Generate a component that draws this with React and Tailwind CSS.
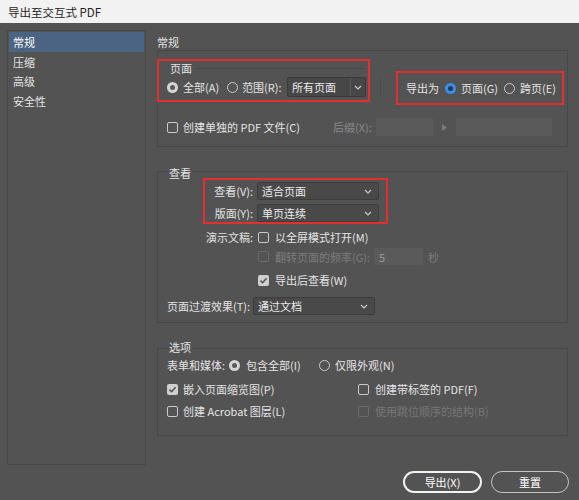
import React from "react";

function Radio({ checked, blue, className = "" }) {
  if (blue) {
    return (
      <span className={"w-[11px] h-[11px] rounded-full bg-[#3b8ee6] flex items-center justify-center shrink-0 " + className}>
        <span className="w-[5px] h-[5px] rounded-full bg-[#203a57]" />
      </span>
    );
  }
  if (checked) {
    return (
      <span className={"w-[11px] h-[11px] rounded-full bg-[#d4d4d4] flex items-center justify-center shrink-0 " + className}>
        <span className="w-[5px] h-[5px] rounded-full bg-[#5a5a5a]" />
      </span>
    );
  }
  return <span className={"w-[11px] h-[11px] rounded-full border border-[#cacaca] shrink-0 " + className} />;
}

function Checkbox({ checked, disabled, className = "" }) {
  if (checked) {
    return (
      <span className={"w-[11px] h-[11px] rounded-[2px] bg-[#d0d0d0] flex items-center justify-center shrink-0 " + className}>
        <svg width="9" height="9" viewBox="0 0 9 9">
          <path d="M1.5 4.6 L3.6 6.7 L7.6 2.2" fill="none" stroke="#555" strokeWidth="1.6" />
        </svg>
      </span>
    );
  }
  return (
    <span
      className={
        "w-[11px] h-[11px] rounded-[2px] border shrink-0 " +
        (disabled ? "border-[#6b6b6b] " : "border-[#cacaca] ") +
        className
      }
    />
  );
}

function Chevron() {
  return (
    <svg width="8" height="5" viewBox="0 0 8 5" className="shrink-0">
      <path d="M1 1 L4 4 L7 1" fill="none" stroke="#cfcfcf" strokeWidth="1.1" />
    </svg>
  );
}

function Select({ text, className = "" }) {
  return (
    <div className={"flex items-center justify-between h-[18px] bg-[#494949] border border-[#3c3c3c] rounded-[2px] pl-[4px] pr-[6px] " + className}>
      <span className="text-[#ececec]">{text}</span>
      <Chevron />
    </div>
  );
}

export default function App() {
  const red = "border-2 border-[#e3302f]";
  return (
    <div className="w-[579px] h-[500px] bg-[#535353] overflow-hidden flex flex-col text-[11px] leading-[16px] text-[#e4e4e4] font-['Noto_Sans_CJK_SC',sans-serif]">
      {/* Title bar */}
      <div className="h-[23px] shrink-0 bg-[#f2f2f2] flex items-center pl-[8px] text-[11.5px] text-[#1e1e1e]">
        导出至交互式 PDF
      </div>

      <div className="flex pt-[7px] pl-[7px]">
        {/* Sidebar */}
        <div className="w-[139px] h-[435px] border border-[#484848] flex flex-col pt-px">
          <div className="mx-px h-[20px] bg-[#4b6483] flex items-center pl-[4px] text-white">常规</div>
          <div className="h-[19.5px] flex items-center pl-[5px]">压缩</div>
          <div className="h-[19.5px] flex items-center pl-[5px]">高级</div>
          <div className="h-[19.5px] flex items-center pl-[5px]">安全性</div>
        </div>

        {/* Main */}
        <div className="ml-[11px] w-[412px] flex flex-col">
          <div className="h-[16px] mt-[4px]">常规</div>

          {/* Group 1 */}
          <div className="w-[411px] h-[97px] border border-[#474747] flex flex-col">
            <div className="flex items-start">
              <div className={"-ml-px mt-[8px] w-[213px] h-[43px] flex flex-col " + red}>
                <div className="flex items-center h-[12px] mt-[1px]">
                  <span className="ml-[11px] leading-[12px]">页面</span>
                  <div className="flex-1 h-px bg-[#484848] ml-[3px] mr-[3px]" />
                </div>
                <div className="flex items-center h-[20px] mt-[3px] pl-[8px]">
                  <Radio checked />
                  <span className="ml-[5px]">全部(A)</span>
                  <Radio className="ml-[8px]" />
                  <span className="ml-[4px]">范围(R):</span>
                  <div className="ml-auto mr-[2px] w-[79px] h-[20px] flex bg-[#474747] border border-[#3b3b3b] rounded-[2px]">
                    <div className="flex-1 flex items-center pl-[4px] text-[#ececec]">所有页面</div>
                    <div className="w-[15px] border-l border-[#5a5a5a] flex items-center justify-center">
                      <Chevron />
                    </div>
                  </div>
                </div>
              </div>
              <div className="ml-[10px] mt-[27px] w-px h-[19px] bg-[#4a4a4a]" />
              <div className={"ml-[15px] mt-[20px] w-[168px] h-[34px] flex items-center pl-[8px] " + red}>
                <span>导出为</span>
                <Radio blue className="ml-[6px]" />
                <span className="ml-[5px]">页面(G)</span>
                <Radio className="ml-[6px]" />
                <span className="ml-[5px]">跨页(E)</span>
              </div>
            </div>
            <div className="mt-[13px] h-[18px] flex items-center pl-[9px]">
              <div className="w-[166px] flex items-center">
                <Checkbox />
                <span className="ml-[5px]">创建单独的 PDF 文件(C)</span>
              </div>
              <span className="w-[43px] text-[#8a8a8a]">后缀(X):</span>
              <div className="w-[57px] h-[18px] bg-[#5a5a5a]" />
              <svg width="5" height="7" viewBox="0 0 5 7" className="ml-[9px]">
                <path d="M0 0 L5 3.5 L0 7 Z" fill="#7a7a7a" />
              </svg>
              <div className="ml-[9px] w-[96px] h-[18px] bg-[#5a5a5a]" />
            </div>
          </div>

          {/* Group 2 */}
          <div className="mt-[24px] w-[411px] h-[152px] border border-[#474747] flex flex-col">
            <div className="-mt-[6px] ml-[9px] px-[2px] w-fit h-[14px] leading-[14px] bg-[#535353]">查看</div>
            <div className={"-mt-[2px] ml-[45px] w-[185px] h-[46px] flex flex-col pt-[2px] gap-[4px] " + red}>
              <div className="flex items-center h-[18px]">
                <span className="w-[48px] text-right">查看(V):</span>
                <Select text="适合页面" className="ml-[4px] w-[122px]" />
              </div>
              <div className="flex items-center h-[18px]">
                <span className="w-[48px] text-right">版面(Y):</span>
                <Select text="单页连续" className="ml-[4px] w-[122px]" />
              </div>
            </div>
            <div className="mt-[5px] h-[16px] flex items-center">
              <span className="w-[95px] text-right">演示文稿:</span>
              <Checkbox className="ml-[5px]" />
              <span className="ml-[6px]">以全屏模式打开(M)</span>
            </div>
            <div className="mt-[3px] h-[17px] flex items-center pl-[100px]">
              <Checkbox disabled />
              <span className="ml-[6px] w-[99px] text-[#7c7c7c]">翻转页面的频率(G):</span>
              <div className="w-[49px] h-[17px] bg-[#5a5a5a] flex items-center pl-[5px] text-[#9a9a9a]">5</div>
              <span className="ml-[5px] text-[#7c7c7c]">秒</span>
            </div>
            <div className="mt-[7px] h-[16px] flex items-center pl-[100px]">
              <Checkbox checked />
              <span className="ml-[6px]">导出后查看(W)</span>
            </div>
            <div className="mt-[9px] h-[18px] flex items-center pl-[9px]">
              <span className="w-[86px]">页面过渡效果(T):</span>
              <Select text="通过文档" className="w-[122px]" />
            </div>
          </div>

          {/* Group 3 */}
          <div className="mt-[25px] w-[411px] h-[88px] border border-[#474747] flex flex-col">
            <div className="-mt-[9px] ml-[9px] px-[2px] w-fit h-[14px] leading-[14px] bg-[#535353]">选项</div>
            <div className="mt-[3px] h-[16px] flex items-center pl-[9px]">
              <span className="w-[62px]">表单和媒体:</span>
              <Radio checked />
              <span className="ml-[6px] w-[73px]">包含全部(I)</span>
              <Radio />
              <span className="ml-[5px]">仅限外观(N)</span>
            </div>
            <div className="mt-[8px] h-[16px] flex items-center pl-[9px]">
              <div className="w-[191px] flex items-center">
                <Checkbox checked />
                <span className="ml-[5px]">嵌入页面缩览图(P)</span>
              </div>
              <Checkbox />
              <span className="ml-[6px]">创建带标签的 PDF(F)</span>
            </div>
            <div className="mt-[6px] h-[16px] flex items-center pl-[9px]">
              <div className="w-[191px] flex items-center">
                <Checkbox />
                <span className="ml-[5px]">创建 Acrobat 图层(L)</span>
              </div>
              <Checkbox disabled />
              <span className="ml-[6px] text-[#777777]">使用跳位顺序的结构(B)</span>
            </div>
          </div>

          {/* Buttons */}
          <div className="mt-[35px] flex justify-end gap-[9px]">
            <div className="w-[79px] h-[22px] rounded-full border-2 border-[#f2f2f2] flex items-center justify-center text-white">
              导出(X)
            </div>
            <div className="w-[78px] h-[22px] rounded-full border-[1.5px] border-[#c4c4c4] flex items-center justify-center text-white">
              重置
            </div>
          </div>
        </div>
      </div>
    </div>
  );
}
